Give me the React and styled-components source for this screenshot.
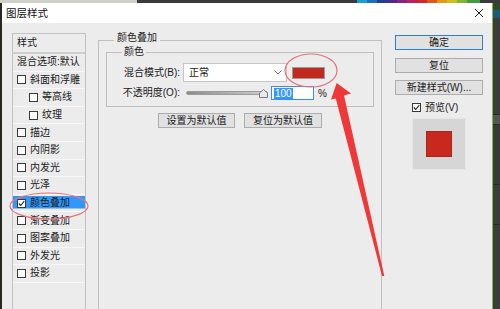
import React from 'react';
import styled, { createGlobalStyle } from 'styled-components';

const Global = createGlobalStyle`
  html, body { margin: 0; padding: 0; width: 500px; height: 309px; overflow: hidden; background: #3a3a3a; }
  body { font-family: "Liberation Sans", "Noto Sans CJK SC", sans-serif; font-size: 10px; color: #1a1a1a; }
  #root { width: 500px; height: 309px; }
  * { box-sizing: border-box; }
`;

const Screen = styled.div`
  position: relative;
  width: 500px;
  height: 309px;
  display: flex;
  flex-direction: column;
  overflow: hidden;
`;

const TopStrip = styled.div`
  display: flex;
  height: 3px;
  flex: none;
  background: #3a3a3a;
`;

const StripSeg = styled.div`
  width: ${p => p.w}px;
  flex: none;
  background: ${p => p.c};
`;

const Desk = styled.div`
  flex: 1;
  display: flex;
  min-height: 0;
`;

const LeftEdge = styled.div`
  width: 2px;
  flex: none;
  background: #272a22;
`;

const RightEdge = styled.div`
  flex: 1;
  display: flex;
  flex-direction: column;
  background: #3c3c3c;
`;

const EdgeBlock = styled.div`
  height: ${p => p.h}px;
  flex: none;
  background: ${p => p.c};
  border-bottom: ${p => (p.line ? '1px solid #2a2a2a' : 'none')};
`;

const Dialog = styled.div`
  width: 491px;
  flex: none;
  display: flex;
  flex-direction: column;
  background: #ececec;
  border-right: 1px solid #86b84a;
`;

const TitleBar = styled.div`
  height: 20px;
  flex: none;
  display: flex;
  align-items: center;
  justify-content: space-between;
  padding: 0 8px 0 4px;
  background: #ffffff;
`;

const Title = styled.span`
  font-size: 10.5px;
  line-height: 14px;
  color: #111;
`;

const Body = styled.div`
  flex: 1;
  min-height: 0;
  display: flex;
  align-items: flex-start;
  padding: 0 0 0 10px;
  overflow: hidden;
`;

/* ---------- sidebar ---------- */
const Sidebar = styled.div`
  width: 74px;
  flex: none;
  margin-top: 10px;
  align-self: stretch;
  display: flex;
  flex-direction: column;
  border: 1px solid #c2c2c2;
  border-bottom: none;
  background: #ececec;
`;

const SideHeader = styled.div`
  height: 20px;
  flex: none;
  padding-left: 4px;
  display: flex;
  align-items: center;
  border-bottom: 2px solid #cdcdcd;
  line-height: 14px;
`;

const SideItem = styled.div`
  height: 17.6px;
  flex: none;
  display: flex;
  align-items: center;
  gap: 4px;
  padding-left: ${p => (p.$indent ? 16 : 4)}px;
  border-bottom: 1px solid #f7f7f7;
  white-space: nowrap;
  overflow: hidden;
  line-height: 14px;
  background: ${p =>
    p.$selected ? 'linear-gradient(#3197f8, #3197f8) 0 1.5px / 100% 12.5px no-repeat' : 'transparent'};
`;

const Box = styled.span`
  width: 9px;
  height: 9px;
  flex: none;
  border: 1px solid #3a3a3a;
  background: #fff;
  display: inline-flex;
  align-items: center;
  justify-content: center;
`;

const CheckBox = ({ checked }) => (
  <Box>
    {checked && (
      <svg width="7" height="7" viewBox="0 0 7 7">
        <path d="M0.8 3.5 L2.7 5.5 L6.3 1.1" fill="none" stroke="#222" strokeWidth="1.1" />
      </svg>
    )}
  </Box>
);

/* ---------- main group ---------- */
const Group = styled.fieldset`
  margin: 8px 0 0 12px;
  width: 284px;
  height: 320px;
  flex: none;
  padding: 0 7px;
  border: 1px solid #c0c0c0;
  min-inline-size: 0;
`;

const GroupLegend = styled.legend`
  margin-left: 8px;
  padding: 0 3px 4px;
  line-height: 14px;
  font-size: 10px;
`;

const SubGroup = styled.fieldset`
  margin: -4px 0 0 0;
  padding: 4px 0 6px 14px;
  border: 1px solid #c0c0c0;
  min-inline-size: 0;
  display: flex;
  flex-direction: column;
  gap: 4px;
`;

const SubLegend = styled.legend`
  margin-left: 1px;
  padding: 0 2px;
  line-height: 14px;
  font-size: 10px;
`;

const Row = styled.div`
  display: flex;
  align-items: center;
  height: ${p => p.h}px;
`;

const Label = styled.span`
  width: 59px;
  flex: none;
  text-align: right;
  white-space: nowrap;
  line-height: 14px;
`;

const Select = styled.div`
  width: 104px;
  height: 19px;
  margin-left: 3px;
  flex: none;
  display: flex;
  align-items: center;
  justify-content: space-between;
  padding: 0 4px 0 5px;
  background: #fff;
  border: 1px solid #c6c6c6;
  line-height: 14px;
`;

const Swatch = styled.div`
  width: 33px;
  height: 12px;
  margin-left: 5px;
  flex: none;
  background: #c1291f;
  border: 1px solid #9a9a9a;
`;

const Slider = styled.div`
  position: relative;
  width: 82px;
  height: 14px;
  margin-left: 6px;
  flex: none;
  display: flex;
  align-items: center;
`;

const Track = styled.div`
  width: 100%;
  height: 4px;
  border-radius: 2px;
  background: linear-gradient(to right, #8c8c8c, #b5b5b5 60%, #cfcfcf);
  border: 1px solid #9c9c9c;
`;

const Handle = styled.svg`
  position: absolute;
  right: 0;
  top: 3px;
`;

const NumInput = styled.div`
  width: 43px;
  height: 14px;
  margin-left: 3px;
  flex: none;
  display: flex;
  align-items: center;
  padding-left: 2px;
  background: #fff;
  border: 1px solid #3a8de0;
`;

const Selected = styled.span`
  background: #3399ff;
  color: #fff;
  font-size: 10px;
  line-height: 11px;
  padding: 0 1px;
`;

const Percent = styled.span`
  margin-left: 4px;
  font-size: 10px;
`;

const ButtonRow = styled.div`
  display: flex;
  justify-content: center;
  gap: 9px;
  margin-top: 6px;
`;

const Button = styled.div`
  width: ${p => p.w}px;
  height: 15px;
  flex: none;
  display: flex;
  align-items: center;
  justify-content: center;
  background: #e1e1e1;
  border: 1px solid ${p => (p.$primary ? '#2f80d0' : '#adadad')};
  white-space: nowrap;
  line-height: 13px;
  font-size: 10px;
`;

/* ---------- right column ---------- */
const RightCol = styled.div`
  width: 88px;
  flex: none;
  margin: 12px 0 0 13px;
  display: flex;
  flex-direction: column;
  gap: 7.5px;
`;

const PreviewToggle = styled.div`
  display: flex;
  align-items: center;
  gap: 4px;
  height: 13px;
  padding-left: 17px;
  margin-top: -2px;
  line-height: 13px;
`;

const PreviewBox = styled.div`
  width: 54px;
  height: 52px;
  align-self: center;
  margin-top: -3px;
  display: flex;
  align-items: center;
  justify-content: center;
  background: #d6d6d6;
  border: 1px solid #e6e6e6;
`;

const PreviewSwatch = styled.div`
  width: 26px;
  height: 26px;
  background: #c9281f;
  border: 1px solid #b0231b;
`;

const Overlay = styled.svg`
  position: absolute;
  left: 0;
  top: 0;
  pointer-events: none;
`;

const sideItems = [
  { label: '斜面和浮雕' },
  { label: '等高线', indent: true },
  { label: '纹理', indent: true },
  { label: '描边' },
  { label: '内阴影' },
  { label: '内发光' },
  { label: '光泽' },
  { label: '颜色叠加', checked: true, selected: true },
  { label: '渐变叠加' },
  { label: '图案叠加' },
  { label: '外发光' },
  { label: '投影' },
];

const strip = [
  [137, '#cdd1c8'],
  [220, '#3a3a3a'],
  [10, '#1a9fd0'],
  [10, '#1f6fb8'],
  [10, '#223f8e'],
  [10, '#4a2b8c'],
  [10, '#8a2380'],
  [10, '#c01f5a'],
  [10, '#d2262a'],
  [10, '#dc5a1c'],
  [10, '#e49a14'],
  [10, '#c9c01e'],
  [10, '#86b332'],
  [13, '#3f9e44'],
];

export default function App() {
  return (
    <>
      <Global />
      <Screen>
        <TopStrip>
          {strip.map(([w, c], i) => (
            <StripSeg key={i} w={w} c={c} />
          ))}
        </TopStrip>
        <Desk>
          <LeftEdge />
          <Dialog>
            <TitleBar>
              <Title>图层样式</Title>
              <svg width="10" height="10" viewBox="0 0 10 10">
                <path d="M1 1 L9 9 M9 1 L1 9" stroke="#222" strokeWidth="1" fill="none" />
              </svg>
            </TitleBar>
            <Body>
              <Sidebar>
                <SideHeader>样式</SideHeader>
                <SideItem>混合选项:默认</SideItem>
                {sideItems.map(it => (
                  <SideItem key={it.label} $indent={it.indent} $selected={it.selected}>
                    <CheckBox checked={it.checked} />
                    {it.label}
                  </SideItem>
                ))}
              </Sidebar>

              <Group>
                <GroupLegend>颜色叠加</GroupLegend>
                <SubGroup>
                  <SubLegend>颜色</SubLegend>
                  <Row h={19}>
                    <Label>混合模式(B):</Label>
                    <Select>
                      正常
                      <svg width="8" height="5" viewBox="0 0 8 5">
                        <path d="M0.5 0.5 L4 4 L7.5 0.5" fill="none" stroke="#777" strokeWidth="1" />
                      </svg>
                    </Select>
                    <Swatch />
                  </Row>
                  <Row h={14}>
                    <Label>不透明度(O):</Label>
                    <Slider>
                      <Track />
                      <Handle width="9" height="9" viewBox="0 0 9 9">
                        <path d="M4.5 0.5 L8.5 4 L8.5 8.5 L0.5 8.5 L0.5 4 Z" fill="#e9e9e9" stroke="#7a7a7a" strokeWidth="1" />
                      </Handle>
                    </Slider>
                    <NumInput>
                      <Selected>100</Selected>
                    </NumInput>
                    <Percent>%</Percent>
                  </Row>
                </SubGroup>
                <ButtonRow>
                  <Button w={77}>设置为默认值</Button>
                  <Button w={78}>复位为默认值</Button>
                </ButtonRow>
              </Group>

              <RightCol>
                <Button w={88} $primary>确定</Button>
                <Button w={88}>复位</Button>
                <Button w={88}>新建样式(W)...</Button>
                <PreviewToggle>
                  <CheckBox checked />
                  预览(V)
                </PreviewToggle>
                <PreviewBox>
                  <PreviewSwatch />
                </PreviewBox>
              </RightCol>
            </Body>
          </Dialog>
          <RightEdge>
            <EdgeBlock h={7} c="#2f4a2a" />
            <EdgeBlock h={8} c="#1e5a78" />
            <EdgeBlock h={97} c="#3c3c3c" line />
            <EdgeBlock h={10} c="#555555" line />
            <EdgeBlock h={60} c="#3a3a3a" line />
            <EdgeBlock h={40} c="#3c3c3c" line />
          </RightEdge>
        </Desk>
        <Overlay width="500" height="309" viewBox="0 0 500 309">
          <ellipse cx="49" cy="206" rx="39" ry="13" fill="none" stroke="#e8717c" strokeWidth="1.2" />
          <ellipse cx="311" cy="70.5" rx="26" ry="16.5" fill="none" stroke="#e8717c" strokeWidth="1.2" />
          <polygon
            points="336.7,83 351,93.5 344,95.5 384.3,276 382,276 335.8,98.5 331,99.5"
            fill="#ef3838"
          />
        </Overlay>
      </Screen>
    </>
  );
}
